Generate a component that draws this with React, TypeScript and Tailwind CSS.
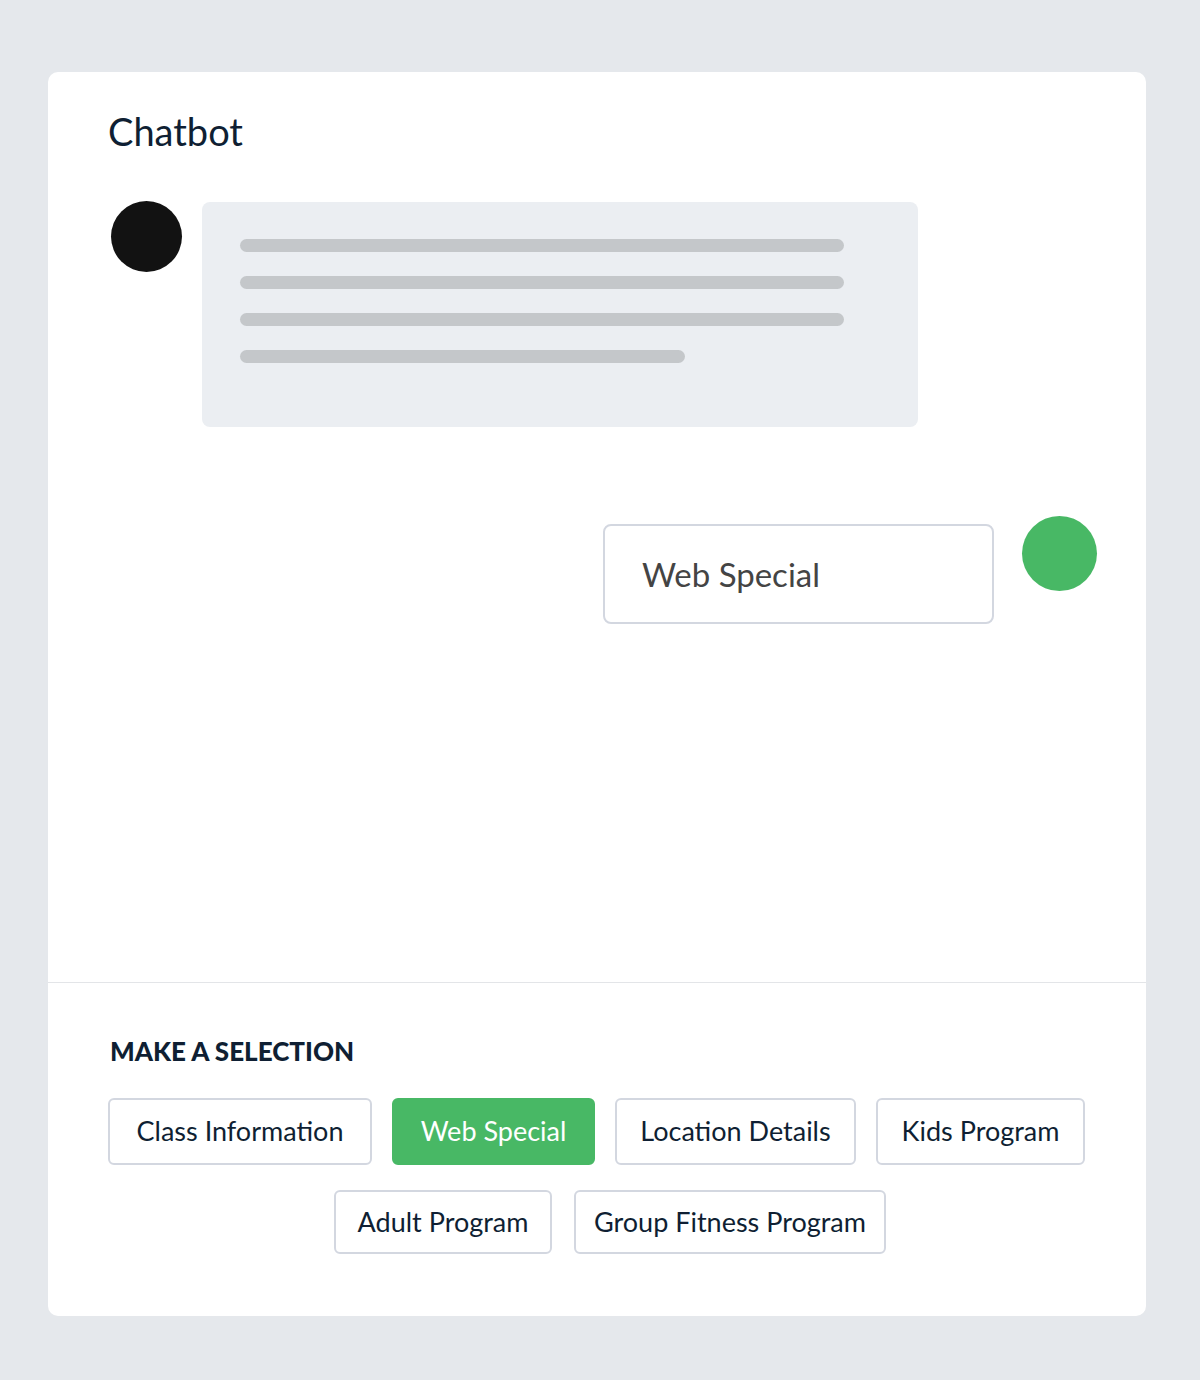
const firstRow = [
  { label: 'Class Information', w: 'w-[264px]' },
  { label: 'Web Special', w: 'w-[203px]' },
  { label: 'Location Details', w: 'w-[241px]' },
  { label: 'Kids Program', w: 'w-[209px]' },
];
const secondRow = [
  { label: 'Adult Program', w: 'w-[218px]' },
  { label: 'Group Fitness Program', w: 'w-[312px]' },
];

const selected = 'Web Special';

function Option({ label, w, h }: { label: string; w: string; h: string }) {
  const active = label === selected;
  return (
    <button
      className={`${w} ${h} rounded-[6px] border-2 text-[27px] whitespace-nowrap ${
        active ? 'bg-[#48b865] border-[#48b865] text-white' : 'bg-white border-[#d3d7e0] text-[#0f1f33]'
      }`}
    >
      {label}
    </button>
  );
}

export default function App() {
  return (
    <div className="min-h-screen bg-[#e5e8ec] pt-[72px] pl-[48px]" style={{ fontFamily: 'Lato, "Open Sans", sans-serif' }}>
      <div className="w-[1098px] h-[1244px] bg-white rounded-[10px] flex flex-col">
        {/* Conversation */}
        <div className="h-[910px] pl-[60px] pr-[49px] pt-[35px]">
          <h1 className="text-[38px] leading-[48px] text-[#0f1f33]">Chatbot</h1>

          <div className="flex items-start mt-[47px]">
            <div className="w-[71px] h-[71px] rounded-full bg-[#121212] ml-[3px] -mt-[1px]" />
            <div className="ml-[20px] w-[716px] h-[225px] bg-[#ebeef2] rounded-[8px] pl-[38px] pt-[37px] flex flex-col gap-[24px]">
              <div className="w-[604px] h-[13px] rounded-full bg-[#c4c7ca]" />
              <div className="w-[604px] h-[13px] rounded-full bg-[#c4c7ca]" />
              <div className="w-[604px] h-[13px] rounded-full bg-[#c4c7ca]" />
              <div className="w-[445px] h-[13px] rounded-full bg-[#c4c7ca]" />
            </div>
          </div>

          <div className="flex items-start justify-end mt-[89px]">
            <div className="mt-[8px] w-[391px] h-[100px] border-2 border-[#d3d7e0] rounded-[8px] flex items-center pl-[37px]">
              <span className="text-[33px] text-[#444] leading-none">Web Special</span>
            </div>
            <div className="ml-[28px] w-[75px] h-[75px] rounded-full bg-[#48b865]" />
          </div>
        </div>

        {/* Selection */}
        <div className="border-t border-[#e3e5e8] pl-[60px] pr-[60px] pt-[50px]">
          <h2 className="text-[26px] leading-[36px] font-black text-[#0f1f33] ml-[2px]">MAKE A SELECTION</h2>
          <div className="mt-[29px] flex flex-col gap-[25px]">
            <div className="flex gap-[20px]">
              {firstRow.map((o) => (
                <Option key={o.label} label={o.label} w={o.w} h="h-[67px]" />
              ))}
            </div>
            <div className="flex justify-center gap-[22px] pl-[26px]">
              {secondRow.map((o) => (
                <Option key={o.label} label={o.label} w={o.w} h="h-[64px]" />
              ))}
            </div>
          </div>
        </div>
      </div>
    </div>
  );
}
